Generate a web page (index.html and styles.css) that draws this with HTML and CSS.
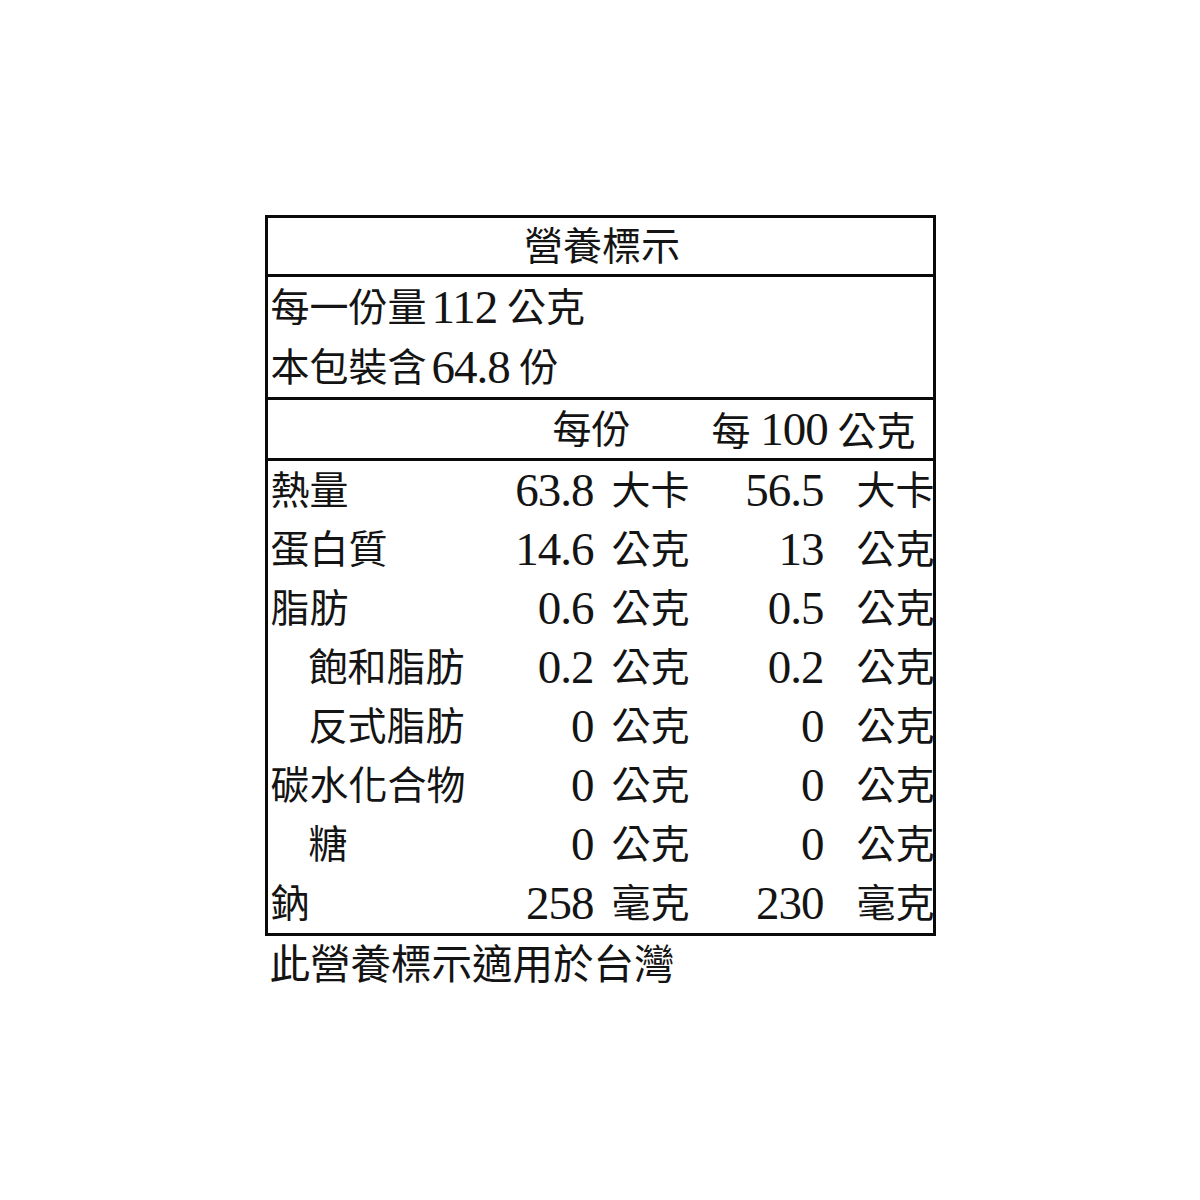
FILE: index.html
```html
<!DOCTYPE html>
<html lang="zh-Hant">
<head>
<meta charset="utf-8">
<title>營養標示</title>
<link rel="stylesheet" href="styles.css">
</head>
<body>
<div class="page">
  <div class="label-box">
    <div class="title">營養標示</div>
    <div class="serving">
      <div class="line">每一份量<span class="n">112</span> 公克</div>
      <div class="line">本包裝含<span class="n">64.8</span> 份</div>
    </div>
    <div class="head">
      <div class="h-per">每份</div>
      <div class="h-100">每 <span class="n">100</span> 公克</div>
    </div>
    <div class="rows">
      <div class="lab">熱量</div><div class="val"><span class="n">63.8</span></div><div class="unit">大卡</div><div class="val"><span class="n">56.5</span></div><div class="unit2">大卡</div>
      <div class="lab">蛋白質</div><div class="val"><span class="n">14.6</span></div><div class="unit">公克</div><div class="val"><span class="n">13</span></div><div class="unit2">公克</div>
      <div class="lab">脂肪</div><div class="val"><span class="n">0.6</span></div><div class="unit">公克</div><div class="val"><span class="n">0.5</span></div><div class="unit2">公克</div>
      <div class="lab sub">飽和脂肪</div><div class="val"><span class="n">0.2</span></div><div class="unit">公克</div><div class="val"><span class="n">0.2</span></div><div class="unit2">公克</div>
      <div class="lab sub">反式脂肪</div><div class="val"><span class="n">0</span></div><div class="unit">公克</div><div class="val"><span class="n">0</span></div><div class="unit2">公克</div>
      <div class="lab">碳水化合物</div><div class="val"><span class="n">0</span></div><div class="unit">公克</div><div class="val"><span class="n">0</span></div><div class="unit2">公克</div>
      <div class="lab sub">糖</div><div class="val"><span class="n">0</span></div><div class="unit">公克</div><div class="val"><span class="n">0</span></div><div class="unit2">公克</div>
      <div class="lab">鈉</div><div class="val"><span class="n">258</span></div><div class="unit">毫克</div><div class="val"><span class="n">230</span></div><div class="unit2">毫克</div>
    </div>
  </div>
  <div class="note">此營養標示適用於台灣</div>
</div>
</body>
</html>
```

FILE: styles.css
```css
html, body {
  margin: 0;
  padding: 0;
  background: #ffffff;
}

body {
  font-family: "Liberation Serif", "Noto Sans CJK TC", serif;
  color: #141414;
  font-size: 39px;
}

.page {
  width: 671px;
  margin: 0 auto;
  padding-top: 215px;
}

.label-box {
  border: 3px solid #0a0a0a;
  display: flex;
  flex-direction: column;
}

.title {
  height: 56px;
  border-bottom: 3px solid #0a0a0a;
  display: flex;
  align-items: center;
  justify-content: center;
  line-height: 1;
  padding-left: 4px;
}

.serving {
  height: 120px;
  border-bottom: 3px solid #0a0a0a;
  display: flex;
  flex-direction: column;
}

.line {
  height: 60px;
  display: flex;
  align-items: center;
  padding-left: 3px;
  line-height: 1;
  white-space: pre;
}

.line .n {
  margin-left: 5px;
}

.head {
  height: 58px;
  border-bottom: 3px solid #0a0a0a;
  display: grid;
  grid-template-columns: 200px 233px 232px;
  align-items: center;
  line-height: 1;
}

.h-per {
  grid-column: 2;
  text-align: right;
  padding-right: 70px;
}

.h-100 {
  grid-column: 3;
  padding-left: 11px;
  white-space: pre;
}

.rows {
  display: grid;
  grid-template-columns: 200px 128px 105px 125px 107px;
  grid-auto-rows: 59px;
  align-items: center;
  line-height: 1;
}

.lab {
  padding-left: 3px;
  white-space: nowrap;
}

.lab.sub {
  padding-left: 41px;
}

.val {
  text-align: right;
  padding-right: 2px;
}

.unit {
  padding-left: 16px;
  white-space: nowrap;
}

.unit2 {
  padding-left: 31px;
  white-space: nowrap;
}

.n {
  font-family: "Liberation Serif", serif;
  font-size: 47px;
  letter-spacing: -1px;
}

.note {
  height: 60px;
  display: flex;
  align-items: center;
  padding-left: 5px;
  font-size: 40.5px;
  line-height: 1;
}
```
